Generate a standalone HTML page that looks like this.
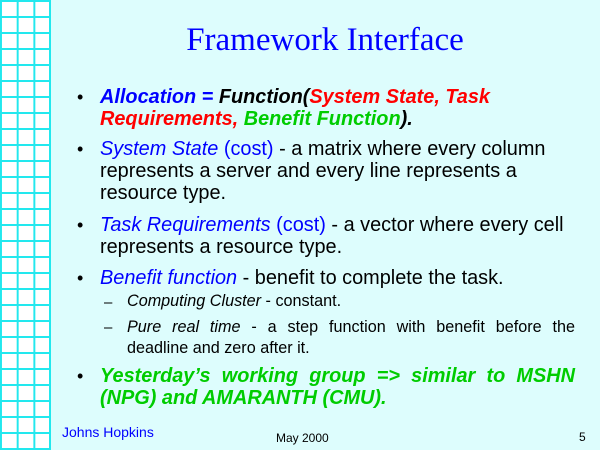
<!DOCTYPE html>
<html><head><style>
html,body{margin:0;padding:0}
body{width:600px;height:450px;position:relative;overflow:hidden;background:#ddfdfd;font-family:"Liberation Sans",sans-serif}
.grid{position:absolute;left:0;top:0;width:51px;height:450px;background-color:#fff;
background-image:linear-gradient(to right,#22e8ee 2px,transparent 2px),linear-gradient(to bottom,#22e8ee 2px,transparent 2px);
background-size:16.7px 16px;background-position:0 0,0 0}
.edge{position:absolute;left:49px;top:0;width:2px;height:450px;background:#22e8ee}
.t{position:absolute;white-space:nowrap}
.b{color:#0000ff}.r{color:#ff0000}.g{color:#00cc00}
.L{position:absolute;left:100px;font-size:19.9px;line-height:22px;white-space:nowrap;color:#000}
.dot{position:absolute;left:77px;font-size:18px;line-height:22px}
.S{position:absolute;left:127px;font-size:16.2px;line-height:18px;white-space:nowrap;color:#000}
.dash{position:absolute;left:104px;font-size:15px;line-height:18px}
.j{text-align:justify;text-align-last:justify}
</style></head><body>
<div class="grid"></div><div class="edge"></div>
<div class="t" style="left:0;width:650px;text-align:center;top:22px;font-family:'Liberation Serif',serif;font-size:33px;color:#0000ff">Framework Interface</div>

<div class="dot" style="top:86px">•</div>
<div class="L" style="top:86px"><i><b><span class="b">Allocation = </span>Function(<span class="r">System State, Task</span></b></i></div>
<div class="L" style="top:108px"><i><b><span class="r">Requirements, </span><span class="g">Benefit Function</span>).</b></i></div>

<div class="dot" style="top:138px">•</div>
<div class="L" style="top:138px"><i class="b">System State</i> <span class="b">(cost)</span> - a matrix where every column</div>
<div class="L" style="top:160px">represents a server and every line represents a</div>
<div class="L" style="top:182px">resource type.</div>

<div class="dot" style="top:214px">•</div>
<div class="L" style="top:214px"><i class="b">Task Requirements</i> <span class="b">(cost)</span> - a vector where every cell</div>
<div class="L" style="top:236px">represents a resource type.</div>

<div class="dot" style="top:267px">•</div>
<div class="L" style="top:267px"><i class="b">Benefit function</i> - benefit to complete the task.</div>

<div class="dash" style="top:294px">–</div>
<div class="S" style="top:292px"><i>Computing Cluster</i> - constant.</div>
<div class="dash" style="top:319px">–</div>
<div class="S j" style="top:318px;width:448px"><i>Pure real time</i> - a step function with benefit before the</div>
<div class="S" style="top:339px">deadline and zero after it.</div>

<div class="dot" style="top:365px">•</div>
<div class="L j" style="top:365px;width:475px"><i><b><span class="g">Yesterday’s working group =&gt; similar to MSHN</span></b></i></div>
<div class="L" style="top:387px"><i><b><span class="g">(NPG) and AMARANTH (CMU).</span></b></i></div>

<div class="t b" style="left:62px;top:424px;font-size:14px">Johns Hopkins</div>
<div class="t" style="left:276px;top:431px;font-size:12px">May 2000</div>
<div class="t" style="left:579px;top:430px;font-size:12px">5</div>
</body></html>
